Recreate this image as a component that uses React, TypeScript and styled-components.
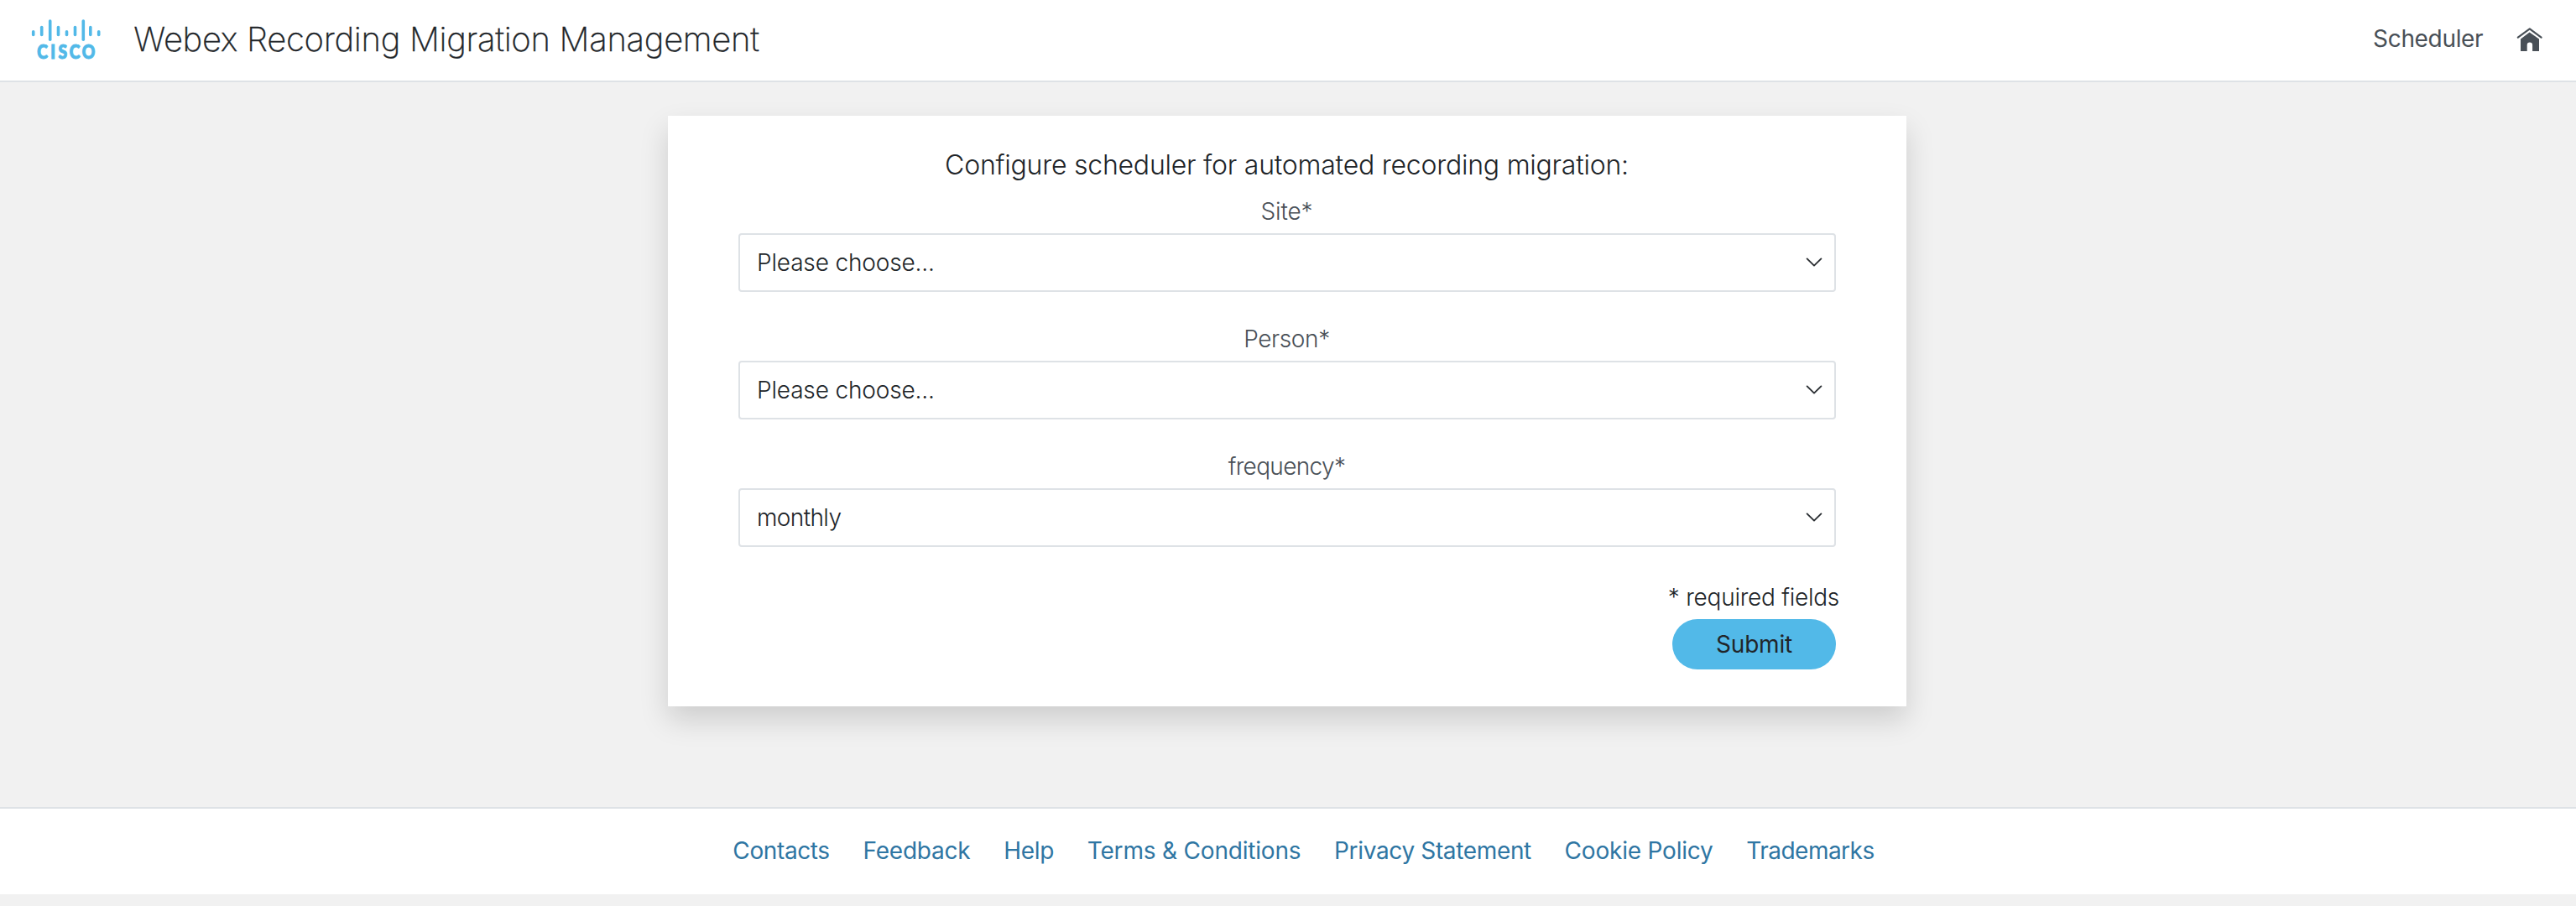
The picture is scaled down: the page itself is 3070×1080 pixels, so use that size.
import React from 'react';
import styled, { createGlobalStyle } from 'styled-components';

const Global = createGlobalStyle`
  * { box-sizing: border-box; }
  body { margin: 0; background: #f1f1f1; color: #212529; font-family: Inter, "Liberation Sans", sans-serif; }
`;

const Page = styled.div`
  display: flex;
  flex-direction: column;
  height: 1080px;
`;

const Header = styled.header`
  display: flex;
  align-items: center;
  height: 98px;
  padding: 0 39px 3px 36px;
  background: #fff;
  border-bottom: 2px solid #dee2e6;
`;

const Title = styled.h1`
  margin: 1px auto 0 37.3px;
  font-size: 40px;
  line-height: 48px;
  font-weight: 200;
  letter-spacing: -0.3px;
  -webkit-text-stroke: 0.35px #212529;
`;

const NavLink = styled.a`
  margin: -1px 39.7px 0 0;
  color: #495057;
  font-size: 28px;
  line-height: 40px;
  letter-spacing: -0.33px;
`;

const Main = styled.main`
  display: flex;
  justify-content: center;
  align-items: flex-start;
  height: 864px;
  padding: 40px 2px 0 0;
`;

const Card = styled.form`
  display: flex;
  flex-direction: column;
  width: 1476px;
  height: 704px;
  padding: 39px 84px 44px;
  background: #fff;
  box-shadow: 0 16px 32px rgba(0, 0, 0, 0.15);
`;

const Heading = styled.h2`
  margin: 0 0 15px;
  padding-right: 1px;
  text-align: center;
  font-size: 32px;
  line-height: 40px;
  font-weight: 300;
  letter-spacing: -0.234px;
`;

const Fields = styled.div`
  display: flex;
  flex-direction: column;
  gap: 36px;
`;

const Field = styled.div`
  display: flex;
  flex-direction: column;
  gap: 6px;
`;

const Label = styled.label<{ $tracking: number }>`
  padding-right: 1px;
  text-align: center;
  color: #495057;
  font-size: 28px;
  line-height: 40px;
  font-weight: 300;
  letter-spacing: ${(p) => p.$tracking}px;
`;

const Select = styled.div<{ $tracking: number }>`
  display: flex;
  align-items: center;
  justify-content: space-between;
  height: 70px;
  padding: 0 14px 0 20px;
  border: 2px solid #dee2e6;
  border-radius: 4px;
  font-size: 28px;
  line-height: 40px;
  font-weight: 300;
  letter-spacing: ${(p) => p.$tracking}px;
`;

const Actions = styled.div`
  display: flex;
  flex-direction: column;
  align-items: flex-end;
  gap: 6px;
  margin-top: 40px;
`;

const Note = styled.span`
  margin-right: -4px;
  font-size: 28px;
  line-height: 40px;
  font-weight: 300;
  letter-spacing: -0.25px;
`;

const Submit = styled.button`
  width: 195px;
  height: 60px;
  padding: 0;
  border: 0;
  border-radius: 30px;
  background: #52b9e8;
  color: #212529;
  font: 400 28px/40px Inter, "Liberation Sans", sans-serif;
  letter-spacing: -0.2px;
`;

const Footer = styled.footer`
  display: flex;
  justify-content: center;
  align-items: center;
  gap: 39.7px;
  height: 104px;
  padding: 0 0 2px 37px;
  background: #fff;
  border-top: 2px solid #dee2e6;
`;

const FooterLink = styled.a<{ $tracking: number }>`
  color: #2f76a3;
  font-size: 28px;
  line-height: 40px;
  letter-spacing: ${(p) => p.$tracking}px;
`;

const Glyph = styled.svg`
  display: block;
  flex: none;
  overflow: visible;
`;

const Wordmark = styled.text`
  font: 900 21.8px Lato, sans-serif;
  stroke: #52b9e8;
  stroke-width: 1.1px;
`;

const bars = [
  [39.7, 36, 43.3], [49.7, 30.8, 43.3], [59.7, 23.3, 49], [69.5, 30.8, 43.3], [79.5, 36, 43.3],
  [89.5, 30.8, 43.3], [99.3, 23.3, 49], [107.8, 30.8, 43.3], [117.7, 36, 43.3],
];

const Logo = () => (
  <Glyph width="86" height="56" viewBox="36 19 86 56" fill="#52b9e8">
    {bars.map(([x, top, bottom]) => (
      <rect key={x} x={x - 1.8} y={top} width="3.6" height={bottom - top} rx="1.8" />
    ))}
    <Wordmark transform="scale(0.88 1)" x="50.2 68.6 79 94 111" y="70.4">
      CISCO
    </Wordmark>
  </Glyph>
);

const Home = () => (
  <Glyph width="32" height="30" viewBox="0 0 32 30">
    <path d="M1.8 12.6L15.8 2.3L29.6 12.6" fill="none" stroke="#495057" strokeWidth="2.2" strokeLinecap="round" strokeLinejoin="round" />
    <path d="M15.6 6.5L27 14.6V29H19.1V21.8A3.2 3.2 0 0 0 12.7 21.8V29H5V14.6Z" fill="#495057" />
  </Glyph>
);

const Chevron = () => (
  <Glyph width="20" height="12" viewBox="0 0 20 12">
    <path d="M1.6 1.4L10 9.6L18.4 1.4" fill="none" stroke="#2b2f33" strokeWidth="1.9" strokeLinecap="round" strokeLinejoin="round" />
  </Glyph>
);

const fields = [
  { label: 'Site*', value: 'Please choose...', labelTracking: -0.15, valueTracking: -0.16 },
  { label: 'Person*', value: 'Please choose...', labelTracking: -0.37, valueTracking: -0.16 },
  { label: 'frequency*', value: 'monthly', labelTracking: -0.65, valueTracking: -0.6 },
];

const links: [string, number][] = [
  ['Contacts', -0.39],
  ['Feedback', -0.2],
  ['Help', -0.3],
  ['Terms & Conditions', -0.19],
  ['Privacy Statement', -0.35],
  ['Cookie Policy', -0.2],
  ['Trademarks', -0.53],
];

export default function App() {
  return (
    <Page>
      <Global />
      <Header>
        <Logo />
        <Title>Webex Recording Migration Management</Title>
        <NavLink>Scheduler</NavLink>
        <Home />
      </Header>
      <Main>
        <Card>
          <Heading>Configure scheduler for automated recording migration:</Heading>
          <Fields>
            {fields.map((f) => (
              <Field key={f.label}>
                <Label $tracking={f.labelTracking}>{f.label}</Label>
                <Select $tracking={f.valueTracking}>
                  <span>{f.value}</span>
                  <Chevron />
                </Select>
              </Field>
            ))}
          </Fields>
          <Actions>
            <Note>* required fields</Note>
            <Submit type="button">Submit</Submit>
          </Actions>
        </Card>
      </Main>
      <Footer>
        {links.map(([text, tracking]) => (
          <FooterLink key={text} $tracking={tracking}>{text}</FooterLink>
        ))}
      </Footer>
    </Page>
  );
}
